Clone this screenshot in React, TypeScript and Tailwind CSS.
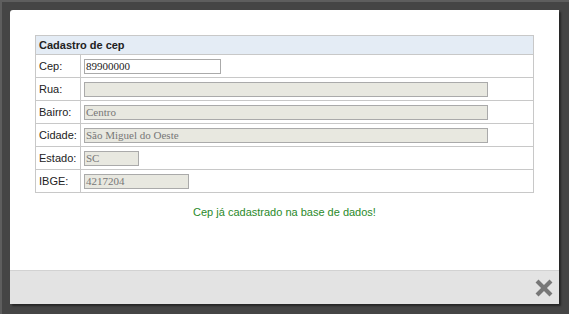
import { X } from 'lucide-react';

const rows = [
  { label: 'Cep:', value: '89900000', width: 'w-[137px]', editable: true },
  { label: 'Rua:', value: '', width: 'w-[404px]' },
  { label: 'Bairro:', value: 'Centro', width: 'w-[404px]' },
  { label: 'Cidade:', value: 'São Miguel do Oeste', width: 'w-[404px]' },
  { label: 'Estado:', value: 'SC', width: 'w-[55px]' },
  { label: 'IBGE:', value: '4217204', width: 'w-[105px]' },
];

export default function App() {
  return (
    <div className="w-[569px] h-[314px] bg-[#454545] border-t-2 border-l-2 border-[#5e5e5e] pt-[8px] pl-[8px] font-['Liberation_Sans',Arial,sans-serif]">
      {/* Modal */}
      <div className="w-[549px] h-[294px] bg-white rounded-tl-[3px] flex flex-col shadow-[2px_2px_2px_rgba(0,0,0,0.45)]">
        <div className="flex-1 px-[25px] pt-[25px]">
          <table className="w-full table-fixed border-collapse text-[11px] text-[#222]">
            <colgroup>
              <col className="w-[45px]" />
              <col />
            </colgroup>
            <thead>
              <tr>
                <th
                  colSpan={2}
                  className="h-[19px] border border-[#c8c8c8] bg-[#e4ecf5] text-left font-bold px-[3px] leading-none">
                  Cadastro de cep
                </th>
              </tr>
            </thead>
            <tbody>
              {rows.map((r) => (
                <tr key={r.label} className="h-[23px]">
                  <td className="border border-[#c8c8c8] px-[3px] py-0 leading-none">{r.label}</td>
                  <td className="border border-[#c8c8c8] pl-[3px] py-0">
                    <div
                      className={`${r.width} h-[15px] border border-[#aaa] px-[1px] flex items-center font-['Liberation_Serif','Times_New_Roman',serif] text-[11px] leading-none ${
                        r.editable ? 'bg-white text-[#222]' : 'bg-[#e8e8e0] text-[#777]'
                      }`}>
                      {r.value}
                    </div>
                  </td>
                </tr>
              ))}
            </tbody>
          </table>
          <p className="mt-[11px] text-center text-[11px] text-[#2a8a2a]">
            Cep já cadastrado na base de dados!
          </p>
        </div>
        {/* Footer */}
        <div className="h-[34px] bg-[#e3e3e3] border-t border-[#d2d2d2] flex items-center justify-end pr-[4px]">
          <X className="w-[22px] h-[22px] text-[#777]" strokeWidth={4.5} strokeLinecap="square" />
        </div>
      </div>
    </div>
  );
}
